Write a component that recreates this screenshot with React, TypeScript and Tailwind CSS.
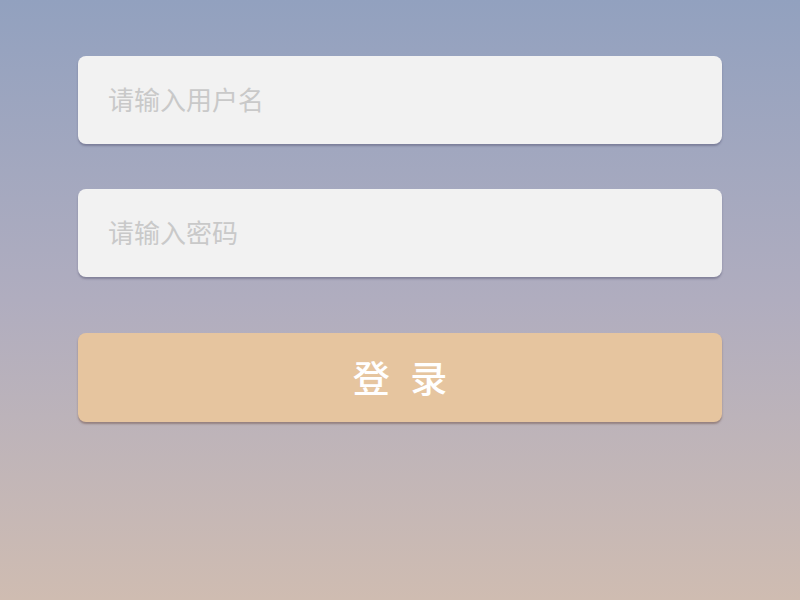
import React from 'react';

const font = { fontFamily: '"Noto Sans CJK SC", "Liberation Sans", sans-serif' };

export default function App() {
  return (
    <div
      className="w-[800px] h-[600px] bg-gradient-to-b from-[#92a1bf] via-[#b0adbf] to-[#cfbcb1] px-[78px] pt-[56px]"
      style={font}
    >
      <div className="flex flex-col">
        <input
          className="h-[88px] w-full rounded-lg bg-[#f2f2f2] px-[30px] pb-[3px] text-[26px] text-[#555] placeholder-[#c9c9c9] outline-none shadow-[0_2px_2px_rgba(80,80,110,0.45)]"
          placeholder="请输入用户名"
        />
        <input
          type="password"
          className="mt-[45px] h-[88px] w-full rounded-lg bg-[#f2f2f2] px-[30px] pb-[3px] text-[26px] text-[#555] placeholder-[#c9c9c9] outline-none shadow-[0_2px_2px_rgba(80,80,110,0.45)]"
          placeholder="请输入密码"
        />
        <button className="mt-[56px] h-[89px] w-full rounded-lg bg-[#e6c59f] pl-[6px] text-[37px] font-medium text-white tracking-[6px] shadow-[0_2px_2px_rgba(110,80,70,0.5)]">
          登 录
        </button>
      </div>
    </div>
  );
}
